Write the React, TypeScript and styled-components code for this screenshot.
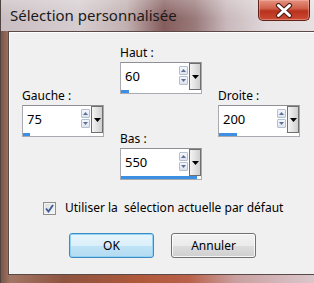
import styled, { createGlobalStyle } from "styled-components";

const GlobalStyle = createGlobalStyle`
  html, body {
    margin: 0;
    padding: 0;
    background: #ffffff;
  }
  body {
    font-family: "Noto Sans", "Open Sans", sans-serif;
  }
`;

const Window = styled.div`
  width: 314px;
  height: 283px;
  overflow: hidden;
  display: flex;
  flex-direction: column;
  box-sizing: border-box;
  border-left: 1px solid #4e4340;
`;

const TitleBar = styled.div`
  height: 31px;
  flex-shrink: 0;
  display: flex;
  align-items: flex-start;
  background:
    linear-gradient(180deg, rgba(255, 255, 255, 0.25) 0%, rgba(255, 255, 255, 0) 60%),
    linear-gradient(
      90deg,
      #c9bec1 0%,
      #d6cdd0 25%,
      #c2b0b1 40%,
      #855c5c 52%,
      #9a7a7b 62%,
      #c8b8bb 72%,
      #e0d8db 85%,
      #e7e1e4 100%
    );
`;

const Title = styled.div`
  flex: 1;
  padding: 5px 0 0 9px;
  font-size: 15px;
  line-height: 20px;
  color: #1a1a1a;
`;

const CloseButton = styled.div`
  width: 52px;
  height: 21px;
  margin-right: 4px;
  box-sizing: border-box;
  display: flex;
  align-items: center;
  justify-content: center;
  border: 1px solid #5e2219;
  border-top: none;
  border-radius: 0 0 5px 5px;
  background: linear-gradient(180deg, #e49380 0%, #d0604a 42%, #b8321e 55%, #cc4a34 100%);
  box-shadow: inset 0 0 0 1px rgba(255, 200, 190, 0.4);
`;

const Body = styled.div`
  flex: 1;
  display: flex;
  padding: 0 0 8px 7px;
  background: linear-gradient(
    90deg,
    #7d5647 0%,
    #a27665 3%,
    #8e5440 20%,
    #b0593a 45%,
    #b9614a 60%,
    #c9a0a0 75%,
    #dac7cc 100%
  );
`;

const Panel = styled.div`
  flex: 1;
  margin-right: -6px;
  display: flex;
  flex-direction: column;
  background: #f0f0f0;
  border: 1px solid #5a4946;
  box-shadow: inset 1px 1px 0 #ffffff;
  font-size: 12px;
  color: #000;
`;

const Fields = styled.div`
  display: grid;
  grid-template-columns: 82px 82px 82px;
  column-gap: 16px;
  align-items: center;
  padding: 13px 0 0 13px;
`;

const Column = styled.div<{ $stack?: boolean }>`
  display: flex;
  flex-direction: column;
  gap: ${({ $stack }) => ($stack ? "37px" : "0")};
`;

const Field = styled.div`
  display: flex;
  flex-direction: column;
  gap: 2px;
`;

const Label = styled.div`
  line-height: 15px;
  white-space: nowrap;
`;

const SpinBox = styled.div`
  width: 82px;
  height: 32px;
  box-sizing: border-box;
  display: flex;
  flex-direction: column;
  background: #ffffff;
  border: 1px solid #a8abb2;
  border-top-color: #8e9096;
`;

const SpinRow = styled.div`
  height: 27px;
  display: flex;
  align-items: flex-start;
`;

const Value = styled.div`
  flex: 1;
  padding-left: 4px;
  line-height: 27px;
  font-size: 13px;
`;

const Arrows = styled.div`
  display: flex;
  flex-direction: column;
  gap: 1px;
  padding-top: 3px;
  margin-right: 1px;
`;

const ArrowButton = styled.div`
  width: 9px;
  height: 9px;
  box-sizing: border-box;
  display: flex;
  align-items: center;
  justify-content: center;
  border: 1px solid #b6bfcf;
  border-radius: 1px;
  background: linear-gradient(180deg, #f4f6fa 0%, #dde3ee 100%);
`;

const DropButton = styled.div`
  width: 12px;
  height: 27px;
  box-sizing: border-box;
  display: flex;
  align-items: center;
  justify-content: center;
  border: 1px solid #6f6f6f;
  background: linear-gradient(90deg, #f4f4f4 0%, #e2e2e2 50%, #cfcfcf 100%);
`;

const Track = styled.div`
  flex: 1;
  display: flex;
  align-items: flex-end;
`;

const Bar = styled.div`
  height: 3px;
  background: #3c8fe2;
`;

const CheckRow = styled.label`
  display: flex;
  align-items: center;
  gap: 9px;
  margin: 20px 0 0 34px;
  line-height: 16px;
  white-space: nowrap;
`;

const CheckBox = styled.span`
  width: 13px;
  height: 13px;
  box-sizing: border-box;
  display: flex;
  align-items: center;
  justify-content: center;
  border: 1px solid #8e8f8f;
  background: linear-gradient(135deg, #dcdcdc 0%, #f6f6f6 100%);
  box-shadow: inset 0 0 0 1px #f4f4f4;
`;

const ButtonRow = styled.div`
  display: flex;
  gap: 17px;
  margin: 17px 0 0 60px;
`;

const Button = styled.div<{ $primary?: boolean }>`
  width: 85px;
  height: 25px;
  box-sizing: border-box;
  display: flex;
  align-items: center;
  justify-content: center;
  border-radius: 3px;
  font-size: 12px;
  border: 1px solid ${({ $primary }) => ($primary ? "#3c8ac2" : "#707070")};
  background: ${({ $primary }) =>
    $primary
      ? "linear-gradient(180deg, #e8f5fc 0%, #d9effa 50%, #bfe3f6 51%, #b3dbf1 100%)"
      : "linear-gradient(180deg, #f2f2f2 0%, #ebebeb 50%, #dddddd 51%, #cfcfcf 100%)"};
  box-shadow: inset 0 0 0 1px
    ${({ $primary }) => ($primary ? "rgba(140, 210, 245, 0.9)" : "rgba(255, 255, 255, 0.8)")};
`;

const Tri = ({ up }: { up: boolean }) => (
  <svg width="5" height="3" viewBox="0 0 5 3">
    <polygon points={up ? "0,3 5,3 2.5,0" : "0,0 5,0 2.5,3"} fill="#5c6f98" />
  </svg>
);

type SpinProps = { label: string; value: number; max: number };

const SpinField = ({ label, value, max }: SpinProps) => (
  <Field>
    <Label>{label}</Label>
    <SpinBox>
      <SpinRow>
        <Value>{value}</Value>
        <Arrows>
          <ArrowButton>
            <Tri up />
          </ArrowButton>
          <ArrowButton>
            <Tri up={false} />
          </ArrowButton>
        </Arrows>
        <DropButton>
          <svg width="7" height="4" viewBox="0 0 7 4">
            <polygon points="0,0 7,0 3.5,4" fill="#000" />
          </svg>
        </DropButton>
      </SpinRow>
      <Track>
        <Bar style={{ width: Math.round((value / max) * 80) }} />
      </Track>
    </SpinBox>
  </Field>
);

export default function App() {
  return (
    <>
      <GlobalStyle />
      <Window>
        <TitleBar>
          <Title>Sélection personnalisée</Title>
          <CloseButton>
            <svg width="18" height="15" viewBox="0 0 18 15">
              <path
                d="M3.5 2.5 L14.5 12.5 M14.5 2.5 L3.5 12.5"
                stroke="#4a1c16"
                strokeWidth="5"
                strokeLinecap="round"
              />
              <path
                d="M3.5 2.5 L14.5 12.5 M14.5 2.5 L3.5 12.5"
                stroke="#ffffff"
                strokeWidth="3"
                strokeLinecap="round"
              />
            </svg>
          </CloseButton>
        </TitleBar>
        <Body>
          <Panel>
            <Fields>
              <Column>
                <SpinField label="Gauche :" value={75} max={900} />
              </Column>
              <Column $stack>
                <SpinField label="Haut :" value={60} max={580} />
                <SpinField label="Bas :" value={550} max={580} />
              </Column>
              <Column>
                <SpinField label="Droite :" value={200} max={900} />
              </Column>
            </Fields>
            <CheckRow>
              <CheckBox>
                <svg width="9" height="9" viewBox="0 0 9 9">
                  <path
                    d="M1 4.5 L3.5 7.5 L8 1"
                    fill="none"
                    stroke="#3a5a98"
                    strokeWidth="1.8"
                  />
                </svg>
              </CheckBox>
              <span>Utiliser la&nbsp; sélection actuelle par défaut</span>
            </CheckRow>
            <ButtonRow>
              <Button $primary>OK</Button>
              <Button>Annuler</Button>
            </ButtonRow>
          </Panel>
        </Body>
      </Window>
    </>
  );
}
